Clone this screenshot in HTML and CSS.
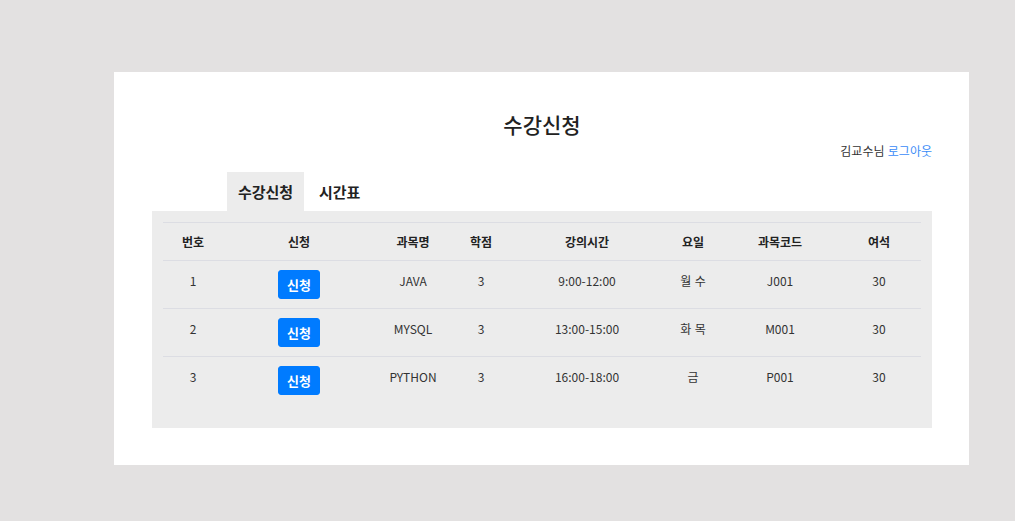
FILE: index.html
```html
<!DOCTYPE html>
<html lang="ko">
<head>
<meta charset="utf-8">
<title>수강신청</title>
<link rel="stylesheet" href="styles.css">
</head>
<body>
<div class="card">
  <h1 class="title">수강신청</h1>
  <div class="user">김교수님 <a href="#" class="logout">로그아웃</a></div>
  <ul class="tabs">
    <li class="tab active">수강신청</li>
    <li class="tab">시간표</li>
  </ul>
  <div class="panel">
    <table class="course-table">
      <colgroup>
        <col class="c1"><col class="c2"><col class="c3"><col class="c4">
        <col class="c5"><col class="c6"><col class="c7"><col class="c8">
      </colgroup>
      <thead>
        <tr><th>번호</th><th>신청</th><th>과목명</th><th>학점</th><th>강의시간</th><th>요일</th><th>과목코드</th><th>여석</th></tr>
      </thead>
      <tbody>
        <tr><td>1</td><td><button class="btn">신청</button></td><td>JAVA</td><td>3</td><td class="time" lang="en">9:00-12:00</td><td>월 수</td><td>J001</td><td>30</td></tr>
        <tr><td>2</td><td><button class="btn">신청</button></td><td>MYSQL</td><td>3</td><td class="time" lang="en">13:00-15:00</td><td>화 목</td><td>M001</td><td>30</td></tr>
        <tr><td>3</td><td><button class="btn">신청</button></td><td>PYTHON</td><td>3</td><td class="time" lang="en">16:00-18:00</td><td>금</td><td>P001</td><td>30</td></tr>
      </tbody>
    </table>
  </div>
</div>
</body>
</html>
```

FILE: styles.css
```css
* { box-sizing: border-box; }
body {
  margin: 0;
  background: #e3e1e1;
  font-family: "Noto Sans CJK KR", "Noto Sans", sans-serif;
  color: #333;
}
.card {
  margin: 72px 0 0 114px;
  width: 855px;
  background: #fff;
  padding: 37px 37px 37px 38px;
}
.title {
  margin: 0;
  text-align: center;
  font-size: 21px;
  line-height: 30px;
  font-weight: 500;
  color: #222;
}
.user {
  margin-top: 4px;
  text-align: right;
  font-size: 12px;
  line-height: 16px;
  color: #333;
}
.logout { color: #3b8cf7; text-decoration: none; }
.tabs {
  list-style: none;
  margin: 13px 0 0 75px;
  padding: 0;
  display: flex;
}
.tab {
  font-size: 15px;
  font-weight: 700;
  line-height: 21px;
  padding: 9px 15px;
  color: #222;
}
.tab.active {
  background: #ececec;
  width: 77px;
  padding: 9px 0;
  text-align: center;
}
.panel {
  background: #ececec;
  padding: 11px 11px 24px;
}
.course-table {
  width: 758px;
  border-collapse: collapse;
  table-layout: fixed;
  font-size: 12px;
}
.c1 { width: 60px; } .c2 { width: 152px; } .c3 { width: 76px; } .c4 { width: 60px; }
.c5 { width: 152px; } .c6 { width: 60px; } .c7 { width: 114px; } .c8 { width: 84px; }
.course-table th {
  border-top: 1px solid #dcdde3;
  padding: 9px 0;
  line-height: 19px;
  font-weight: 700;
  text-align: center;
  color: #222;
}
.course-table td {
  border-top: 1px solid #dcdde3;
  padding: 9px 0;
  line-height: 21px;
  text-align: center;
  vertical-align: top;
  color: #333;
}
.btn {
  display: inline-block;
  vertical-align: top;
  width: 42px;
  font-family: inherit;
  font-size: 13px;
  font-weight: 700;
  line-height: 19px;
  padding: 4px 0;
  border: 1px solid #007bff;
  border-radius: 3px;
  background: #007bff;
  color: #fff;
  text-align: center;
  cursor: pointer;
}
```
